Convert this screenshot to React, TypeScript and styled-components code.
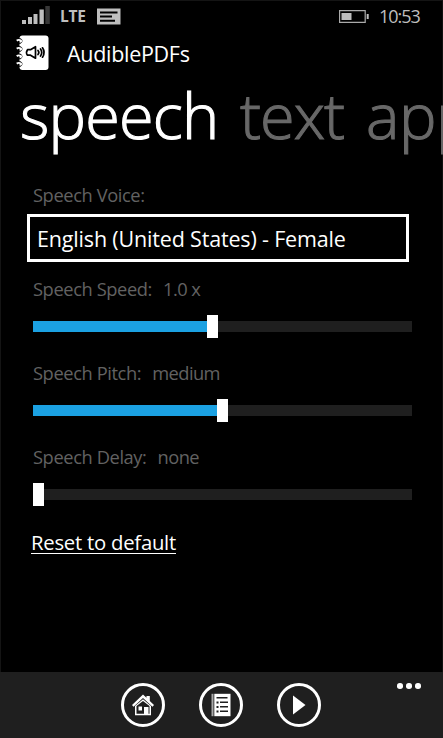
import React from 'react';
import styled, { createGlobalStyle } from 'styled-components';

const GlobalStyle = createGlobalStyle`
  * { box-sizing: border-box; }
  body { margin: 0; background: #000; }
`;

const Phone = styled.div`
  display: flex;
  flex-direction: column;
  width: 443px;
  height: 738px;
  overflow: hidden;
  background: #000;
  color: #fff;
  font-family: 'Open Sans', 'Noto Sans', sans-serif;
  white-space: pre;
  box-shadow: inset 1px 1px 0 #141414, inset -1px 0 0 #101010;
`;

const StatusBar = styled.div`
  display: flex;
  align-items: center;
  flex: none;
  height: 32px;
  padding: 0 22px;
  color: #bebebe;
`;

const Carrier = styled.span`
  margin-left: 10px;
  width: 37px;
  font-size: 15.5px;
  font-weight: 700;
  line-height: 32px;
  letter-spacing: -0.2px;
`;

const Clock = styled.span`
  margin-left: 10px;
  width: 42px;
  font-size: 18px;
  letter-spacing: -1px;
  line-height: 32px;
`;

const Spacer = styled.div`
  flex: 1;
`;

const Header = styled.header`
  display: flex;
  flex: none;
  height: 40px;
  padding: 3px 0 0 16px;
`;

const AppName = styled.h1`
  margin: 0 0 0 18px;
  font-size: 21.5px;
  font-weight: 400;
  line-height: 37px;
  letter-spacing: -0.3px;
`;

const Pivot = styled.nav`
  display: flex;
  flex: none;
  height: 98px;
  padding-left: 20px;
  font-size: 63px;
  font-weight: 300;
  line-height: 86px;
`;

const PivotItem = styled.span<{ $active?: boolean; $width: number; $tracking: number }>`
  flex: none;
  width: ${(p) => p.$width}px;
  color: ${(p) => (p.$active ? '#fff' : '#686868')};
  letter-spacing: ${(p) => p.$tracking}px;
  -webkit-text-stroke: 1.1px currentColor;
`;

const Settings = styled.main`
  display: flex;
  flex-direction: column;
  flex: 1;
  padding: 12px 0 0 33px;
`;

const Label = styled.div`
  display: flex;
  height: 28px;
  color: #626262;
  font-size: 18.3px;
  line-height: 26px;
  letter-spacing: -0.4px;
`;

const Value = styled.span`
  margin-left: 11px;
  letter-spacing: -0.55px;
`;

const VoicePicker = styled.button`
  width: 382px;
  height: 48px;
  margin: 4px 0 14px -6px;
  padding: 1px 0 0 7px;
  border: 3px solid #fff;
  border-radius: 0;
  background: #000;
  color: #fff;
  font: 400 21.5px/41px 'Open Sans', 'Noto Sans', sans-serif;
  letter-spacing: -0.17px;
  text-align: left;
`;

const Slider = styled.div`
  display: flex;
  align-items: center;
  width: 379px;
  height: 23px;
  margin: 11px 0 22px;
`;

const Fill = styled.div<{ $length: number }>`
  width: ${(p) => p.$length}px;
  height: 11px;
  background: #1ba1e2;
`;

const Thumb = styled.div`
  width: 11px;
  height: 23px;
  background: #fff;
`;

const Rest = styled.div`
  flex: 1;
  height: 11px;
  background: #1f1f1f;
`;

const ResetLink = styled.a`
  align-self: flex-start;
  height: 22px;
  margin: 4px 0 0 -2px;
  border-bottom: 1px solid #fff;
  font-size: 20.3px;
  line-height: 21px;
  letter-spacing: -0.24px;
`;

const AppBar = styled.footer`
  display: grid;
  grid-template-columns: 1fr 44px 44px 44px 1fr;
  column-gap: 34px;
  flex: none;
  height: 66px;
  padding: 11px 22px 0 20px;
  background: #1f1f1f;
`;

const RoundButton = styled.button`
  display: flex;
  align-items: center;
  justify-content: center;
  width: 44px;
  height: 44px;
  padding: 0;
  border: 3px solid #fff;
  border-radius: 50%;
  background: none;
`;

const More = styled.div`
  display: flex;
  justify-content: flex-end;
  gap: 3.6px;
`;

const Dot = styled.i`
  width: 5.6px;
  height: 5.6px;
  border-radius: 50%;
  background: #fff;
`;

const SignalIcon = () => (
  <svg width="28" height="20" viewBox="0 0 28 20" fill="#bebebe">
    <path d="M0 14h4v4H0zM6 11h4v7H6zM11.500 8h4v10h-4zM17.500 3.500h4.300v14.500h-4.300z" />
    <path d="M23.300 0h4.500v18h-4.500z" fill="#383838" />
  </svg>
);

const MessageIcon = () => (
  <svg width="24" height="17" viewBox="0 0 24 17">
    <path d="M0 .5h23.500v16H0z" fill="#bebebe" />
    <path d="M3 3.500h17.500v2H3zM3 7.500h12v2H3zM3 11.700h15v2H3z" fill="#000" />
  </svg>
);

const BatteryIcon = () => (
  <svg width="30" height="13" viewBox="0 0 30 13" fill="#bebebe">
    <path d="M.6 .6h25.600v11.800H.6z" fill="none" stroke="#aaa" strokeWidth="1.200" />
    <path d="M2.500 3H12.500v7H2.500zM27.700 4h2v5h-2z" />
  </svg>
);

const Logo = () => (
  <svg width="33" height="36" viewBox="0 0 33 36">
    <rect x="3.500" y=".5" width="29" height="34.500" rx="3" fill="#fff" />
    {[6, 14, 21.500, 29].map((y) => (
      <g key={y}>
        <path d={`M0 ${y - 2.700}h4.500q4 2.700 0 5.400H0z`} fill="#000" />
        <path d={`M.7 ${y - 0.400}Q2.800 ${y - 1.800} 5 ${y - 0.500}Q5.800 ${y + 0.600} 3.600 ${y + 1}`} fill="none" stroke="#fff" strokeWidth="1.900" />
      </g>
    ))}
    <g fill="none" stroke="#000" strokeWidth="1.700" strokeLinecap="round" strokeLinejoin="round">
      <path d="M11.500 14.700h3l5-3v11.500l-5-3h-3q-2-2.700 0-5.500zM19.500 15v5" />
      <path d="M22 15.500q1.700 2 0 4M24.500 14q2.500 3.500 0 7M26.500 12.800q3.200 4.700 0 9.400" />
    </g>
  </svg>
);

const HomeIcon = () => (
  <svg width="24" height="24" viewBox="0 0 24 24" fill="#fff">
    <path d="M12 1.500 15.500 4.800V3H18.800V8L23 12l-1.500 1.700L12 5 2.500 13.700 1 12z" />
    <path fillRule="evenodd" d="M4 13 12 6.200 20 13v9.300H4zM5.500 13v7.700h7.500V14h4v6.700h1.500V13L12 8z" />
    <path d="M13 14h4.500v7.500h-4.500zM7.500 13.500h3.500v4H7.500z" />
  </svg>
);

const ListIcon = () => (
  <svg width="22" height="24" viewBox="0 0 22 24">
    <path d="M1.500 .8h2v22.400h-2z" fill="#a8a8a8" />
    <path d="M4.300 .8H20.500v22.400H4.300z" fill="#fff" />
    <path d="M6.500 4h11v1.500h-11zM6.500 8.500H8.500v2h-2zM10 8.500h8v1.500h-8zM6.500 13h2v2h-2zM10 13h8v1.500h-8zM6.500 17.500h2v2h-2zM10 17.500h8v1.500h-8z" fill="#1f1f1f" />
  </svg>
);

const PlayIcon = () => (
  <svg width="14" height="20" viewBox="0 0 14 20">
    <path d="M1 .5 13.500 10 1 19.500z" fill="#fff" />
  </svg>
);

const sliders = [
  { label: 'Speech Speed:', value: '1.0 x', fill: 174 },
  { label: 'Speech Pitch:', value: 'medium', fill: 184 },
  { label: 'Speech Delay:', value: 'none', fill: 0 },
];

export default function App() {
  return (
    <Phone>
      <GlobalStyle />
      <StatusBar>
        <SignalIcon />
        <Carrier>LTE</Carrier>
        <MessageIcon />
        <Spacer />
        <BatteryIcon />
        <Clock>10:53</Clock>
      </StatusBar>
      <Header>
        <Logo />
        <AppName>AudiblePDFs</AppName>
      </Header>
      <Pivot>
        <PivotItem $active $width={220} $tracking={-0.8}>speech</PivotItem>
        <PivotItem $width={126} $tracking={-1}>text</PivotItem>
        <PivotItem $width={160} $tracking={-0.4}>app</PivotItem>
      </Pivot>
      <Settings>
        <Label>Speech Voice:</Label>
        <VoicePicker>English (United States) - Female</VoicePicker>
        {sliders.map((s) => (
          <React.Fragment key={s.label}>
            <Label>
              {s.label}
              <Value>{s.value}</Value>
            </Label>
            <Slider>
              <Fill $length={s.fill} />
              <Thumb />
              <Rest />
            </Slider>
          </React.Fragment>
        ))}
        <ResetLink>Reset to default</ResetLink>
      </Settings>
      <AppBar>
        <span />
        <RoundButton aria-label="Home"><HomeIcon /></RoundButton>
        <RoundButton aria-label="Contents"><ListIcon /></RoundButton>
        <RoundButton aria-label="Play"><PlayIcon /></RoundButton>
        <More><Dot /><Dot /><Dot /></More>
      </AppBar>
    </Phone>
  );
}
